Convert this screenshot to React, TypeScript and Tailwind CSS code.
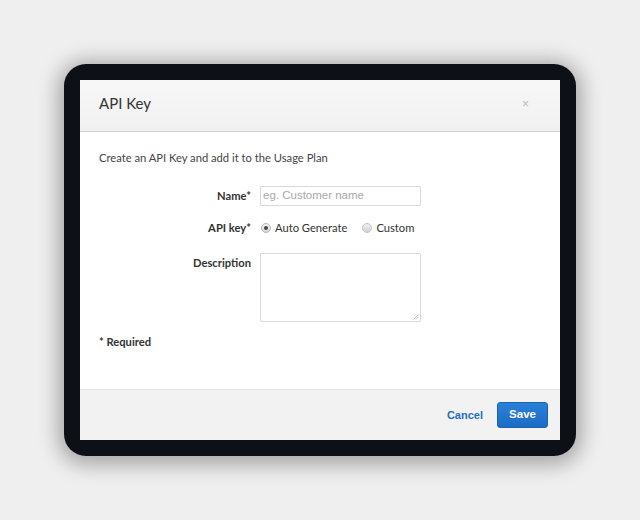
import React from "react";

export default function App() {
  return (
    <div className="w-[640px] h-[520px] bg-[#efefef] flex items-center justify-center" style={{ fontFamily: "Lato, 'Liberation Sans', sans-serif" }}>
      <div className="w-[512px] h-[392px] rounded-[22px] bg-[#0d1017] p-[16px] shadow-[0_3px_20px_6px_rgba(0,0,0,0.3)]">
        <div className="w-full h-full bg-white flex flex-col">
          <div className="h-[52px] shrink-0 bg-gradient-to-b from-[#f7f7f7] to-[#f1f1f1] border-b border-[#cfcfcf] flex items-center justify-between pl-[19px] pr-[31px]">
            <span className="text-[15px] text-[#333] mt-[-4px]">API Key</span>
            <span className="text-[12px] text-[#b8b8b8] font-['Liberation_Sans'] mt-[-4px]">×</span>
          </div>
          <div className="flex-1 px-[19px] pt-[18px]">
            <p className="text-[11.2px] text-[#444] leading-[16px]">Create an API Key and add it to the Usage Plan</p>
            <div className="mt-[20px] grid grid-cols-[152px_161px] gap-x-[9px] items-start">
              <label className="text-right text-[11.2px] font-bold text-[#333] leading-[20px]">Name*</label>
              <div className="h-[20px] w-[161px] border border-[#d9d9d9] rounded-[2px] flex items-center px-[2px]">
                <span className="text-[11.5px] text-[#a9a9a9] font-['Liberation_Sans']">eg. Customer name</span>
              </div>
              <label className="text-right text-[11.2px] font-bold text-[#333] leading-[20px] mt-[12px]">API key*</label>
              <div className="mt-[12px] h-[20px] flex items-center text-[11.2px] text-[#333]">
                <span className="w-[10px] h-[10px] rounded-full border border-[#b5b5b5] bg-gradient-to-b from-[#f2f2f2] to-[#d8d8d8] flex items-center justify-center ml-[1px]">
                  <span className="w-[4px] h-[4px] rounded-full bg-[#444]" />
                </span>
                <span className="ml-[4px]">Auto Generate</span>
                <span className="w-[10px] h-[10px] rounded-full border border-[#c3c3c3] bg-gradient-to-b from-[#f0f0f0] to-[#d3d3d3] ml-[15px]" />
                <span className="ml-[4px]">Custom</span>
              </div>
              <label className="text-right text-[11.2px] font-bold text-[#333] leading-[20px] mt-[15px]">Description</label>
              <div className="mt-[15px] relative h-[69px] w-[161px] border border-[#d9d9d9] rounded-[2px]">
                <svg className="absolute right-[1px] bottom-[1px]" width="6" height="6" viewBox="0 0 6 6">
                  <path d="M5.5 0.5 L0.5 5.5 M5.5 3 L3 5.5" stroke="#aaa" strokeWidth="0.8" />
                </svg>
              </div>
            </div>
            <p className="mt-[12px] text-[11.2px] font-bold text-[#333]">* Required</p>
          </div>
          <div className="h-[51px] shrink-0 bg-[#f2f2f2] border-t border-[#e2e2e2] flex items-center justify-end pr-[12px] gap-[14px] font-['Liberation_Sans']">
            <span className="text-[11px] font-bold text-[#1f6fbf]">Cancel</span>
            <span className="h-[26px] w-[51px] rounded-[3px] bg-gradient-to-b from-[#2a80d6] to-[#1b6cc5] border border-[#1a62b3] text-white text-[11.5px] font-bold flex items-center justify-center">Save</span>
          </div>
        </div>
      </div>
    </div>
  );
}
